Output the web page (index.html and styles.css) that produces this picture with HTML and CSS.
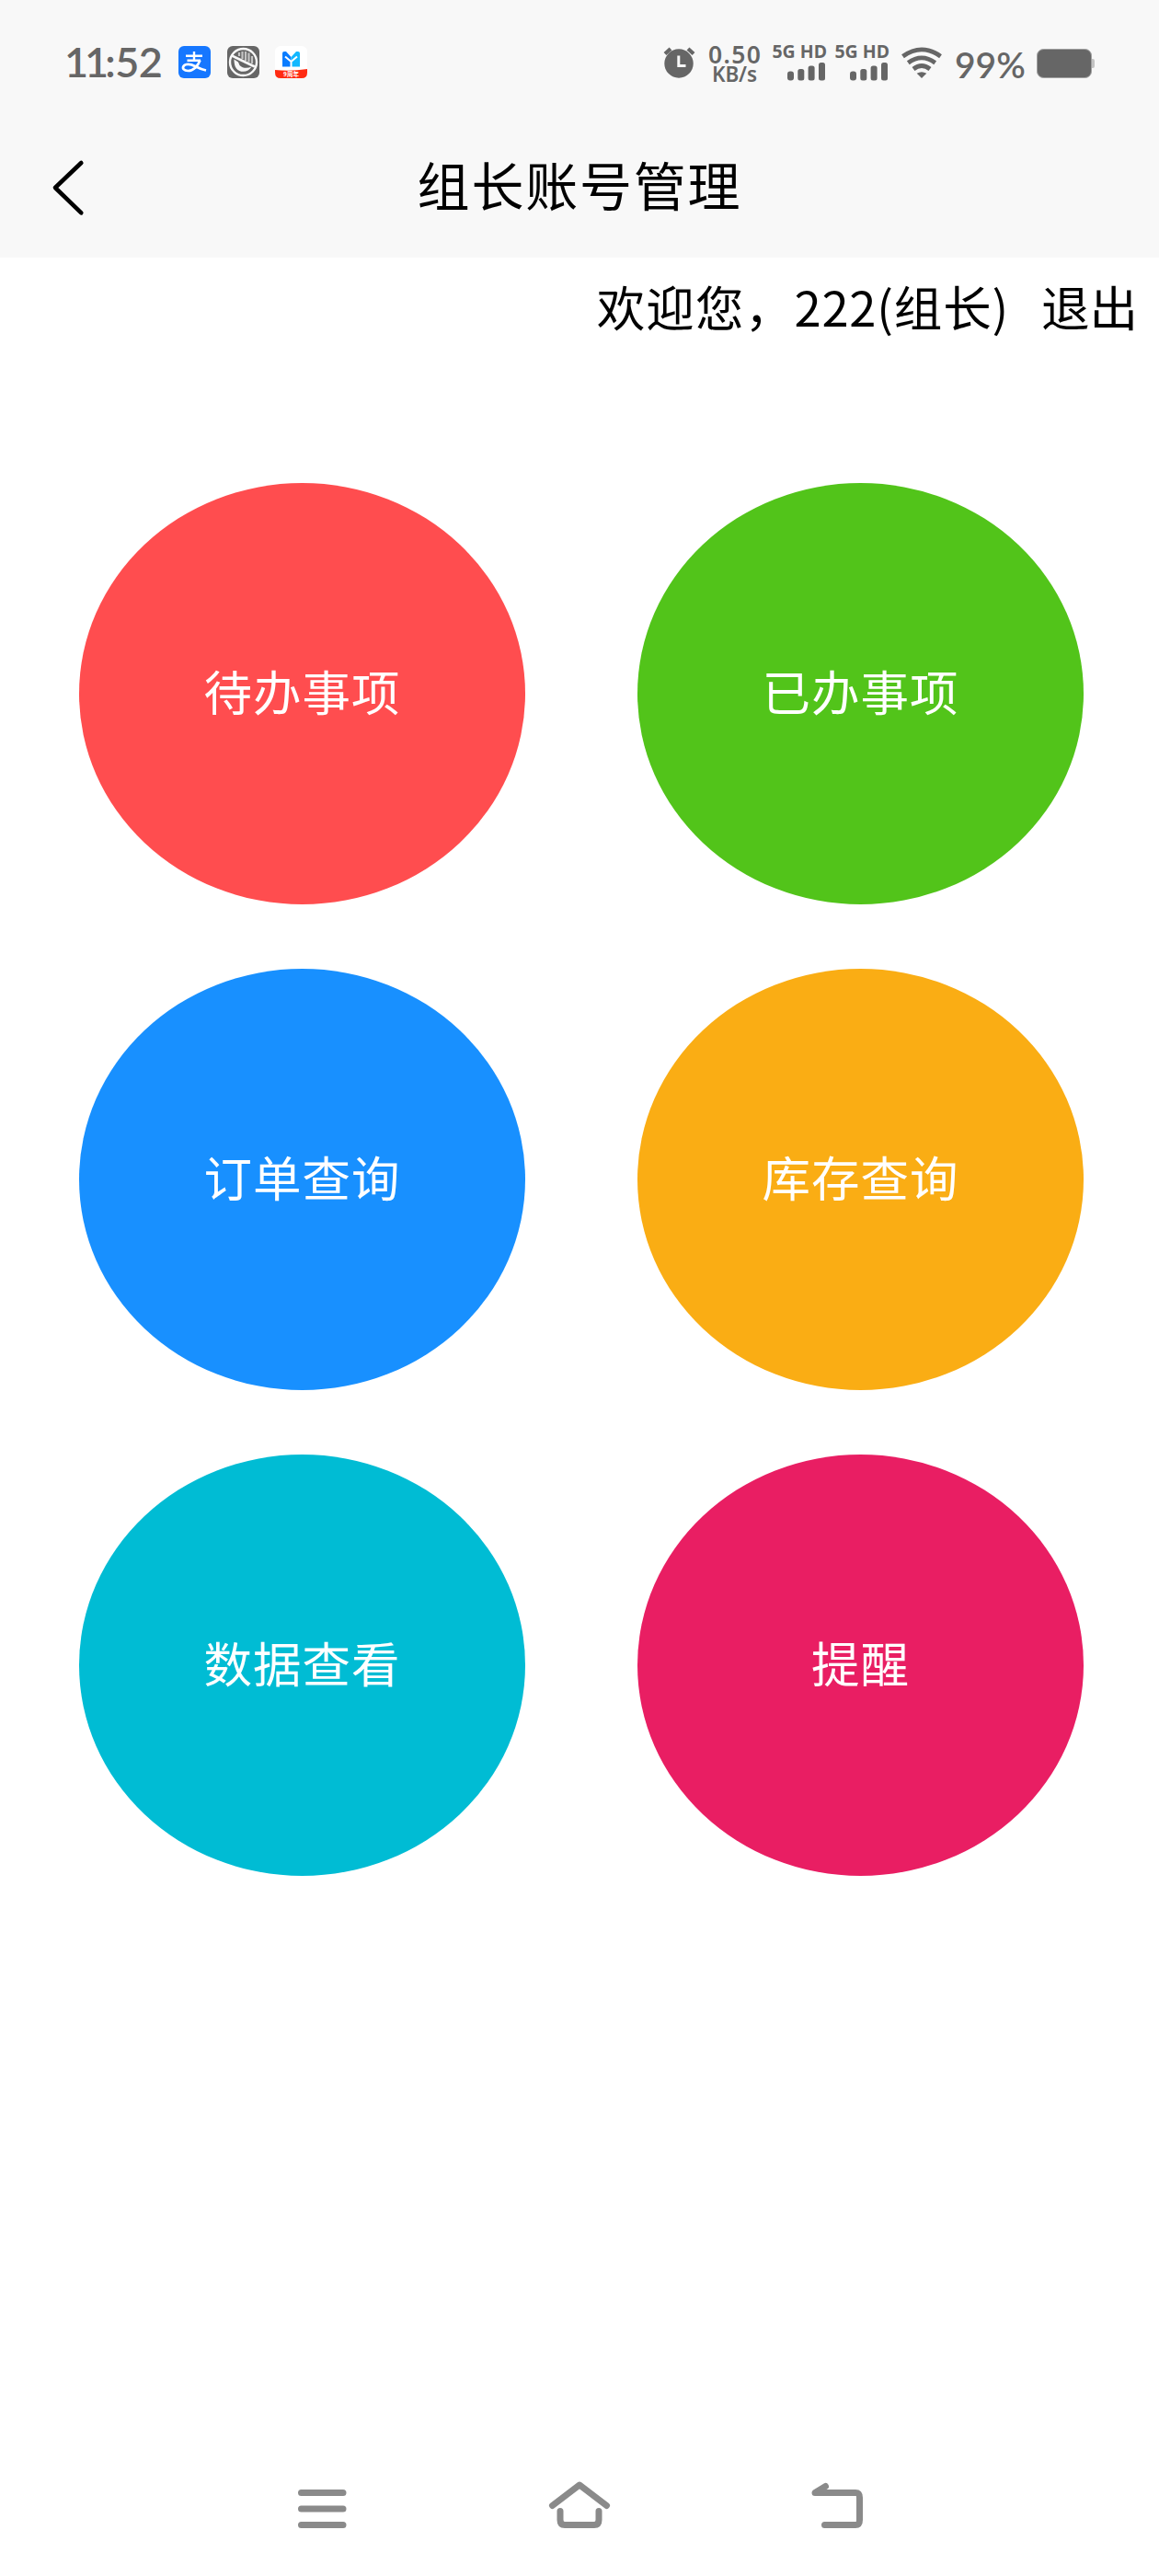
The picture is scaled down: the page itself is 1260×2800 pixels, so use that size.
FILE: index.html
```html
<!DOCTYPE html>
<html lang="zh-CN">
<head>
<meta charset="utf-8">
<title>组长账号管理</title>
<link rel="stylesheet" href="styles.css">
</head>
<body>
<div class="screen">
  <div class="status">
    <div class="status-left">
      <span class="time"><span class="ones">11</span>:52</span>
      <svg class="app" viewBox="0 0 35 35">
        <rect width="35" height="35" rx="6" fill="#1677ff"/>
        <g fill="none" stroke="#fff" stroke-width="2.4">
          <path d="M8 10.700H26M17 6v9.500M9.500 15.800H24"/>
          <path d="M23.500 15.500C21 22 16 27 10.500 27C6 27 4 24.500 5.500 22C7.500 19 13 19.500 18 22C22 24 25 25.500 30 26.500" stroke-width="2.700"/>
        </g>
      </svg>
      <svg class="app" viewBox="0 0 35 35">
        <rect width="35" height="35" rx="6" fill="#666"/>
        <path d="M13 7V11M16.500 6v8M20 6v10M23.500 7.500v10M27 11v8" stroke="#c4c4c4" stroke-width="2.200"/>
        <path d="M7.500 14.500L12 17.500L13.500 21C17 24.500 22 24.500 26.500 22.500C23 29 14 29.500 10 24.500C8 22 7.500 18 7.500 14.500Z" fill="#f8f8f8"/>
        <path d="M5 10.500L30 22.500" stroke="#f8f8f8" stroke-width="2.600"/>
        <circle cx="17.500" cy="17.500" r="14.500" fill="none" stroke="#f8f8f8" stroke-width="2.400"/>
      </svg>
      <svg class="app" viewBox="0 0 35 35">
        <rect width="35" height="35" rx="6" fill="#fff"/>
        <path d="M0 26Q17 28 35 25V29Q35 35 29 35H6Q0 35 0 29Z" fill="#ff2b12"/>
        <path d="M8 22.500V8Q8 6 10 6H12L17.500 12V22.500Z" fill="#0a7cff"/>
        <path d="M17.500 22.500V12L23 6H25Q27 6 27 8V22.500Z" fill="#12b8ff"/>
        <path d="M11 11.500L17.500 17L24 11.500M17.500 17V23" fill="none" stroke="#fff" stroke-width="2"/>
        <text class="badge-text" x="17.500" y="33" text-anchor="middle">9周年</text>
      </svg>
    </div>
    <div class="status-right">
      <svg class="alarm" viewBox="0 0 35 35">
        <circle cx="17" cy="19" r="15.700" fill="#666"/>
        <path d="M2 8.500L8 3M33 8.500L27 3" stroke="#666" stroke-width="4.200"/>
        <path d="M16.800 10.500V21.500H24.500" fill="none" stroke="#f8f8f8" stroke-width="3"/>
      </svg>
      <svg class="speed" viewBox="0 0 60 46">
        <text x="1" y="22" textLength="57" class="rate">0.50</text>
        <text x="5" y="41.500" textLength="49" class="unit">KB/s</text>
      </svg>
      <div class="cell"><span>5G HD</span>
        <svg class="bars" viewBox="0 0 42 20"><g fill="#666"><rect y="9.500" width="7" height="10" rx="3"/><rect x="11.300" y="7" width="7" height="12.500" rx="2.500"/><rect x="22.600" y="3.500" width="7" height="16" rx="2.500"/><rect x="34" width="7" height="19.500" rx="2.500"/></g></svg>
      </div>
      <div class="cell"><span>5G HD</span>
        <svg class="bars" viewBox="0 0 42 20"><g fill="#666"><rect y="9.500" width="7" height="10" rx="3"/><rect x="11.300" y="7" width="7" height="12.500" rx="2.500"/><rect x="22.600" y="3.500" width="7" height="16" rx="2.500"/><rect x="34" width="7" height="19.500" rx="2.500"/></g></svg>
      </div>
      <svg class="wifi" viewBox="0 0 44 34">
        <g fill="none" stroke="#666" stroke-width="4.800">
          <path d="M1.500 10.200Q22 -4.500 42.500 10.200"/><path d="M7.300 17.300Q22 6.500 36.700 17.300"/><path d="M13 24Q22 17 31 24"/>
        </g>
        <path d="M16.700 28.800Q22 25.500 27.300 28.800L22 34Z" fill="#666"/>
      </svg>
      <span class="percent">99%</span>
      <svg class="battery" viewBox="0 0 63 32"><path d="M58 11H61Q63 11 63 13V19Q63 21 61 21H58Z" fill="#c4c4c4"/><rect x=".5" y=".5" width="59" height="31" rx="7" fill="#666" stroke="#a0a0a0"/></svg>
    </div>
  </div>
  <header class="header">
    <svg class="back" viewBox="0 0 36 62"><path d="M32.300 4L4 31L32.300 58.300" fill="none" stroke="#000" stroke-width="4.600" stroke-linecap="round" stroke-linejoin="round"/></svg>
    <h1 class="title">组长账号管理</h1>
  </header>
  <div class="welcome"><span class="greet">欢迎您，</span><span class="user">222(组长)</span><a class="logout">退出</a></div>
  <main class="menu">
    <a class="item red">待办事项</a>
    <a class="item green">已办事项</a>
    <a class="item blue">订单查询</a>
    <a class="item orange">库存查询</a>
    <a class="item cyan">数据查看</a>
    <a class="item pink">提醒</a>
  </main>
  <nav class="nav">
    <svg viewBox="0 0 70 56"><path d="M12.500 12.500H58M12.500 30H58M12.500 47.500H58"/></svg>
    <svg viewBox="0 0 70 56"><path d="M5.500 26.500L35 4L64.500 26.500"/><path d="M14 32.500V42Q14 47.500 19 47.500H51Q56 47.500 56 42V32.500"/></svg>
    <svg viewBox="0 0 70 56"><path d="M21.500 47.500H55Q59.500 47.500 59.500 42V18Q59.500 12.500 55 12.500H11L22.500 5.500"/></svg>
  </nav>
</div>
</body>
</html>
```
FILE: styles.css
```css
body {
  margin: 0;
  background: #fff;
  font-family: "Noto Sans CJK SC", sans-serif;
  color: #000;
}
svg { display: block; flex: none; }
.screen {
  width: 1260px;
  height: 2800px;
  display: flex;
  flex-direction: column;
}
.status {
  height: 124px;
  box-sizing: border-box;
  padding: 0 70px;
  background: #f8f8f8;
  color: #666;
  display: flex;
  justify-content: space-between;
}
.status-left, .status-right { display: flex; align-items: flex-start; }
.status-left { gap: 17.5px; padding-top: 50px; }
.time {
  width: 106.5px;
  font: 600 45px/35px Lato, sans-serif;
  letter-spacing: -0.5px;
  white-space: nowrap;
}
.ones { letter-spacing: -4px; }
.app { width: 35px; height: 35px; }
.badge-text { font: 700 6.5px "Noto Sans CJK SC", sans-serif; fill: #fff; }
.alarm { width: 35px; height: 35px; margin: 50px 13px 0 0; }
.speed { width: 60px; height: 46px; margin: 47px 2px 0 0; fill: #666; }
.rate { font: 600 26.5px "Noto Sans", sans-serif; }
.unit { font: 600 22.5px "Noto Sans", sans-serif; }
.cell {
  width: 58px;
  margin: 46px 0 0 10px;
  display: flex;
  flex-direction: column;
  align-items: flex-end;
  font: 700 19.5px/20px "Noto Sans", sans-serif;
  white-space: nowrap;
}
.cell .bars { width: 42px; height: 20px; margin: 2px 1px 0 0; }
.wifi { width: 44px; height: 34px; margin: 51px 0 0 13px; }
.percent {
  width: 77px;
  margin: 50px 12px 0 14px;
  font: 600 39px/40px Lato, sans-serif;
}
.battery { width: 63px; height: 32px; margin-top: 53px; }
.header {
  height: 156px;
  background: #f8f8f8;
  display: grid;
  grid-template-columns: 56px 1fr 56px;
  align-items: center;
}
.back { width: 36px; height: 62px; margin: 4px 0 0 56px; }
.title {
  margin: 0;
  padding-bottom: 6px;
  text-align: center;
  font-size: 57px;
  font-weight: 400;
  line-height: 80px;
  letter-spacing: 1.8px;
}
.welcome {
  height: 112px;
  padding-right: 23px;
  display: flex;
  justify-content: flex-end;
  font-size: 52.5px;
  line-height: 105px;
  white-space: nowrap;
}
.greet { letter-spacing: 1.2px; }
.user { letter-spacing: 0.8px; }
.logout { margin-left: 35px; }
.menu {
  padding: 133px 82px 0 86px;
  display: grid;
  grid-template-columns: 485px 485px;
  grid-auto-rows: 458px;
  gap: 70px 122px;
}
.item {
  box-sizing: border-box;
  padding-bottom: 8px;
  border-radius: 50%;
  display: flex;
  align-items: center;
  justify-content: center;
  color: #fff;
  font-size: 52.5px;
  letter-spacing: 1px;
}
.red { background: #ff4d4f; }
.green { background: #52c41a; }
.blue { background: #1890ff; }
.orange { background: #faad14; }
.cyan { background: #00bcd4; }
.pink { background: #e91e63; }
.nav {
  margin-top: auto;
  padding: 0 315px 47px;
  display: flex;
  justify-content: space-between;
}
.nav svg {
  width: 70px;
  height: 56px;
  fill: none;
  stroke: #8a8a8a;
  stroke-width: 7;
  stroke-linecap: round;
  stroke-linejoin: round;
}
```
